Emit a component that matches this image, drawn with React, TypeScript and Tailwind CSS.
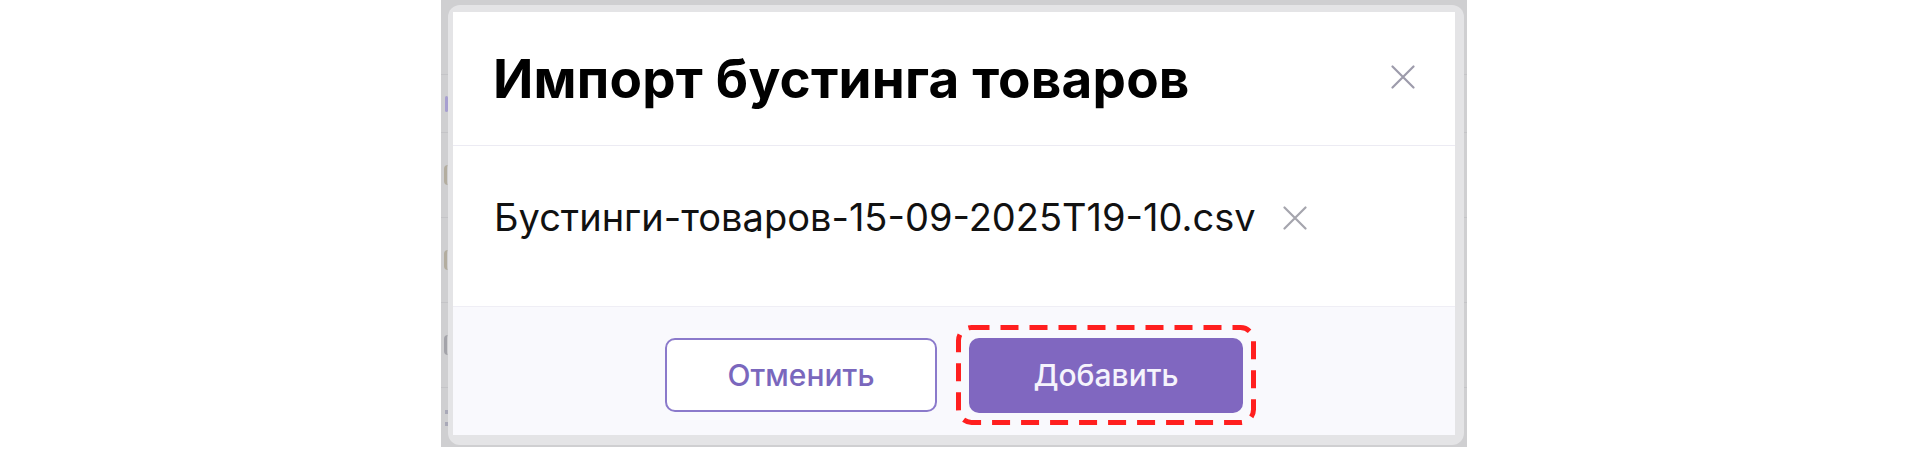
import React from "react";

const XIcon = ({ color, size }: { color: string; size: number }) => (
  <svg width={size} height={size} viewBox="0 0 24 24" fill="none">
    <path d="M1.5 1.5L22.5 22.5M22.5 1.5L1.5 22.5" stroke={color} strokeWidth="2.2" strokeLinecap="round" />
  </svg>
);

type Mark = { h: number; kind: "none" | "bar" | "paren" | "dots"; color: string };

const stripRows: Mark[] = [
  { h: 75, kind: "none", color: "" },
  { h: 58, kind: "bar", color: "bg-[#a79fd0]" },
  { h: 85, kind: "paren", color: "border-[#b3ad9f]" },
  { h: 85, kind: "paren", color: "border-[#b3ad9f]" },
  { h: 85, kind: "paren", color: "border-[#a3a3a9]" },
  { h: 59, kind: "dots", color: "bg-[#a9a9b8]" },
];

export default function App() {
  return (
    <div className="w-[1920px] h-[453px] bg-white flex" style={{ fontFamily: "Inter, 'Noto Sans', sans-serif" }}>
      <div className="w-[441px] shrink-0" />
      <div className="w-[1026px] h-[447px] shrink-0 bg-[#cfcfd1] flex">
        {/* left background strip (page content under the overlay) */}
        <div className="w-[7px] shrink-0 flex flex-col overflow-hidden">
          {stripRows.map((r, i) => (
            <div
              key={i}
              className={`shrink-0 flex items-center justify-end ${i < stripRows.length - 1 ? "border-b border-[#c4c4c7]" : ""}`}
              style={{ height: r.h }}
            >
              {r.kind === "bar" && <div className={`w-[3px] h-[16px] ${r.color} rounded-sm`} />}
              {r.kind === "paren" && <div className={`w-[4px] h-[20px] border-l-[3px] rounded-l-full ${r.color}`} />}
              {r.kind === "dots" && (
                <div className="flex flex-col gap-[8px]">
                  <div className={`w-[3px] h-[4px] ${r.color}`} />
                  <div className={`w-[3px] h-[4px] ${r.color}`} />
                </div>
              )}
            </div>
          ))}
        </div>
        {/* modal frame */}
        <div className="pt-[5px] w-[1016px] shrink-0">
          <div className="h-[440px] rounded-[12px] bg-[#e4e4e6] pl-[5px] pr-[9px] pt-[7px] pb-[10px]">
            <div className="w-[1002px] h-[423px] bg-white flex flex-col">
              {/* header */}
              <div className="h-[134px] shrink-0 border-b border-[#ecebf3] flex items-start justify-between pl-[40px] pr-[40px] pt-[35px]">
                <h2 className="text-[53px] leading-[64px] font-bold text-black tracking-[0.2px]">Импорт бустинга товаров</h2>
                <div className="pt-[18px]">
                  <XIcon color="#9d9bab" size={24} />
                </div>
              </div>
              {/* body */}
              <div className="h-[160px] shrink-0 flex items-start pl-[41px] pt-[48px]">
                <span className="text-[38px] leading-[46px] text-[#111]">Бустинги-товаров-15-09-2025T19-10.csv</span>
                <div className="ml-[27px] pt-[12px]">
                  <XIcon color="#a5a5ad" size={24} />
                </div>
              </div>
              {/* footer */}
              <div className="flex-1 bg-[#f9f9fd] border-t border-[#efeef5] flex justify-center items-start gap-[32px] pt-[31px]">
                <button className="w-[272px] h-[74px] rounded-[10px] border-2 border-[#8b7acb] bg-white text-[#7a67bd] text-[30px] font-medium">
                  Отменить
                </button>
                <div className="relative">
                  <button className="w-[274px] h-[75px] rounded-[10px] bg-[#8067c0] text-[#f5f3fc] text-[30px] font-medium">
                    Добавить
                  </button>
                  <svg className="absolute left-[-13px] top-[-13px]" width="300" height="100" viewBox="0 0 300 100" fill="none">
                    <rect x="2.5" y="2.5" width="295" height="95" rx="13" stroke="#ff1f1f" strokeWidth="5" strokeDasharray="18 11" />
                  </svg>
                </div>
              </div>
            </div>
          </div>
        </div>
        {/* right strip */}
        <div className="w-[3px] shrink-0 flex flex-col">
          {stripRows.map((r, i) => (
            <div
              key={i}
              className={`shrink-0 ${i < stripRows.length - 1 ? "border-b border-[#c4c4c7]" : ""}`}
              style={{ height: r.h }}
            />
          ))}
        </div>
      </div>
    </div>
  );
}
